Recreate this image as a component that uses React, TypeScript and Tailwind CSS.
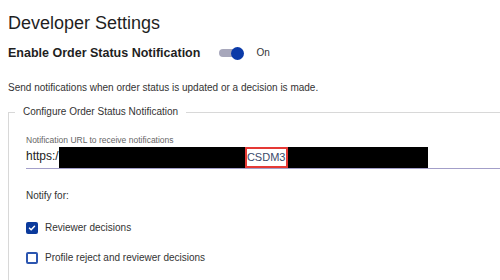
export default function App() {
  return (
    <div className="w-[500px] h-[280px] overflow-hidden bg-white text-[#333] font-['Liberation_Sans',Arial,sans-serif]">
      <div className="pl-2 pt-[13px]">
        <h1 className="text-[18px] leading-[20px] text-[#1f1f1f]">Developer Settings</h1>

        {/* Toggle row */}
        <div className="mt-[13px] flex items-center h-[14px]">
          <span className="text-[12.5px] leading-[14px] font-bold text-[#1f1f1f]">Enable Order Status Notification</span>
          <div className="relative ml-[19px] w-[25px] h-[14px] flex items-center">
            <div className="w-[20px] h-[8px] rounded-full bg-[#a7a7bb]" />
            <div className="absolute right-0 top-[0.5px] w-[13px] h-[13px] rounded-full bg-[#0b3aa8]" />
          </div>
          <span className="ml-[12px] text-[10px] leading-[12px] text-[#333]">On</span>
        </div>

        <p className="mt-[22px] text-[10px] leading-[12px]">
          Send notifications when order status is updated or a decision is made.
        </p>

        <fieldset className="mt-[12px] border border-r-0 border-[#d8d8d8] pl-[17px] pb-6 min-w-0">
          <legend className="ml-[-11px] px-2 text-[10px] leading-[12px]">Configure Order Status Notification</legend>

          <div className="mt-[17px] text-[8.5px] leading-[10px] text-[#666]">Notification URL to receive notifications</div>
          <div className="mt-[2px] flex items-start border-b border-[#a39fc9]">
            <span className="text-[12px] leading-[18px] text-[#222]">https:/</span>
            <div className="w-[186px] h-[21px] bg-black" />
            <div className="w-[43px] h-[21px] border-2 border-solid border-[#e53935] bg-white flex items-center justify-center text-[11px] text-[#3b4a6b]">
              CSDM3
            </div>
            <div className="w-[140px] h-[21px] bg-black" />
          </div>

          <div className="mt-[21px] text-[10px] leading-[12px]">Notify for:</div>

          <label className="mt-[20px] flex items-center gap-[7px] h-[12px]">
            <span className="w-[12px] h-[12px] rounded-[2px] bg-[#0b3a9c] flex items-center justify-center">
              <svg viewBox="0 0 12 12" className="w-[10px] h-[10px]" fill="none" stroke="white" strokeWidth={1.8}>
                <path d="M3 6.2l2 2 4-4.2" strokeLinecap="round" strokeLinejoin="round" />
              </svg>
            </span>
            <span className="text-[10px] leading-[12px]">Reviewer decisions</span>
          </label>

          <label className="mt-[18px] flex items-center gap-[7px] h-[12px]">
            <span className="w-[12px] h-[12px] rounded-[2px] border-2 border-solid border-[#2c56b0] bg-white" />
            <span className="text-[10px] leading-[12px]">Profile reject and reviewer decisions</span>
          </label>
        </fieldset>
      </div>
    </div>
  );
}
